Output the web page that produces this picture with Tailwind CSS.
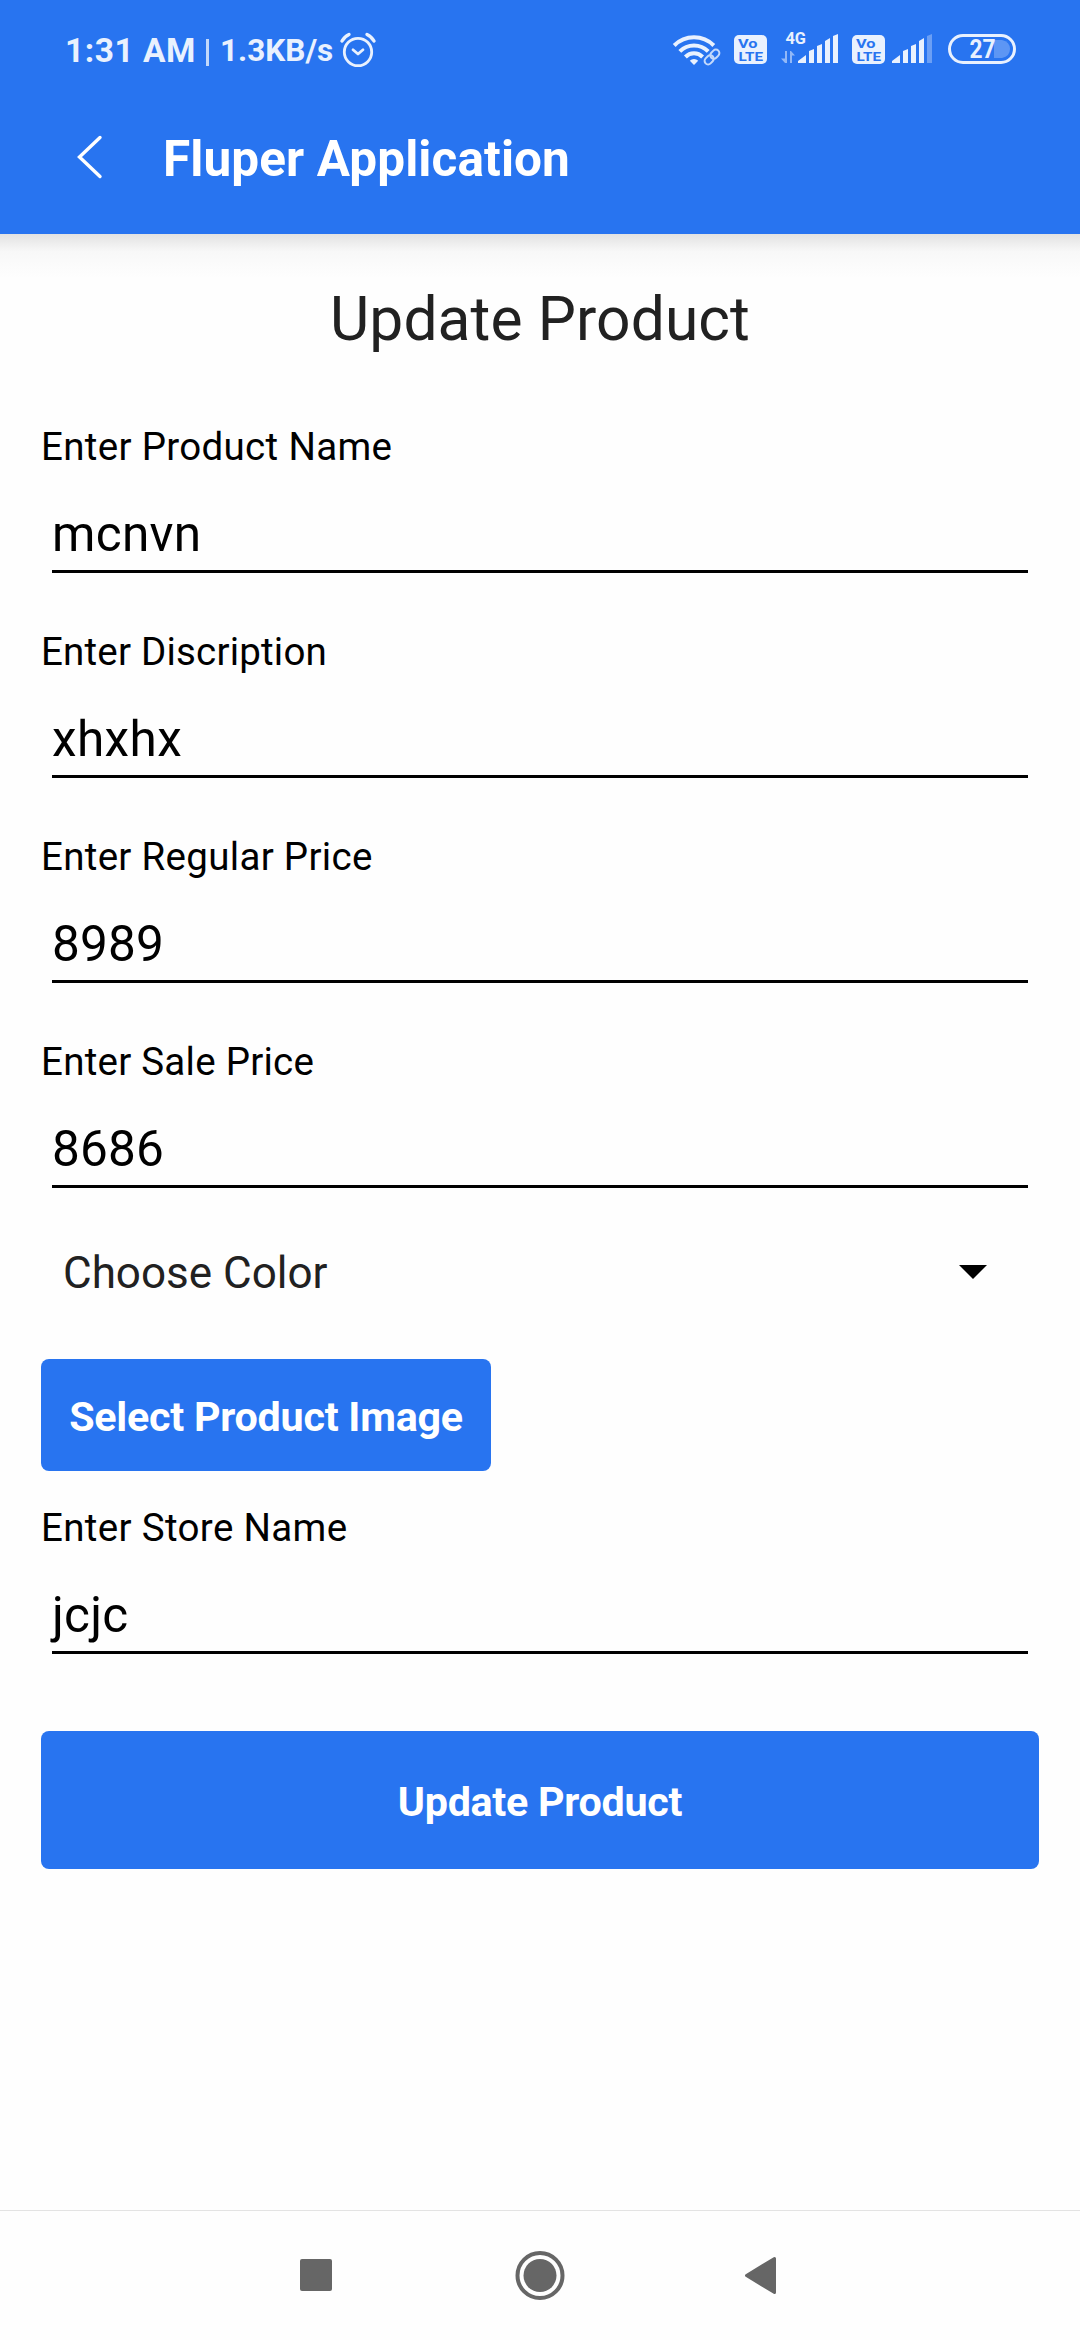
<!DOCTYPE html>
<html lang="en">
<head>
<meta charset="utf-8">
<title>Fluper Application</title>
<script src="https://cdn.jsdelivr.net/npm/@tailwindcss/browser@4"></script>
</head>
<body class="bg-white">
<div class="flex h-[2340px] w-[1080px] flex-col overflow-hidden bg-[#fefefe] font-[Roboto,sans-serif] text-black">

  <header class="relative h-[234px] shrink-0 bg-[#2874f0] text-white">
    <!-- Status bar -->
    <div class="flex h-[98px] items-start pt-[26px] text-[#e9f1fe]">
      <div class="ml-[65px] flex h-[48px] w-[320px] items-start font-bold whitespace-nowrap">
        <span class="w-[141px] text-[33.5px] leading-[49px] tracking-[0.5px]">1:31 AM</span>
        <span class="h-[27px] w-[3px] mt-[13px] bg-[#e9f1fe]/80"></span>
        <span class="ml-[11px] w-[119px] text-[31.5px] leading-[50px]">1.3KB/s</span>
        <svg class="mt-[5px] h-[38px] w-[38px] shrink-0" viewBox="339 31 38 38" fill="none" stroke="currentColor" stroke-linecap="round">
          <circle cx="358" cy="52" r="13.7" stroke-width="2.8"/>
          <path d="M353 49.8l5 4.2 5-4.2" stroke-width="2.8" stroke-linejoin="round"/>
          <path d="M342 41q2.500-4.500 7-6.500M374 41q-2.500-4.500-7-6.500" stroke-width="3.400"/>
        </svg>
      </div>
      <svg class="ml-[285px] mt-[4px] h-[38px] w-[52px]" viewBox="670 30 52 38" fill="none" stroke="currentColor">
        <path d="M674.200 45.500a28 28 0 0 1 39.600 0" stroke-width="4"/>
        <path d="M679.800 51.300a20 20 0 0 1 28.400 0" stroke-width="4"/>
        <path d="M685.400 57a12 12 0 0 1 17.200 0" stroke-width="4"/>
        <path d="M694 65l-4.200-4.300a6 6 0 0 1 8.400 0z" fill="currentColor" stroke="none"/>
        <g stroke="#2874f0" stroke-width="6"><path d="M709 60l7-7"/></g>
        <g stroke="#c3d9fb" stroke-width="2" transform="rotate(-45 712 57)"><rect x="703" y="53.500" width="10" height="7" rx="3.500"/><rect x="711" y="53.500" width="10" height="7" rx="3.500"/></g>
      </svg>
      <svg class="ml-[11px] mt-[4px] h-[38px] w-[35px]" viewBox="733 30 35 38">
        <rect x="734" y="35" width="33" height="29" rx="5" fill="currentColor"/>
        <text x="738" y="47.700" textLength="19.500" lengthAdjust="spacingAndGlyphs" font-size="13.500" font-weight="700" fill="#2874f0">Vo</text>
        <text x="738.500" y="61" textLength="24.500" lengthAdjust="spacingAndGlyphs" font-size="13.500" font-weight="700" fill="#2874f0">LTE</text>
      </svg>
      <svg class="ml-[12px] mt-[4px] h-[38px] w-[60px]" viewBox="780 30 60 38" fill="currentColor">
        <text x="785.500" y="44" textLength="20.500" lengthAdjust="spacingAndGlyphs" font-size="16" font-weight="700">4G</text>
        <path d="M785 51h2v12h-2l-4-4.500h4zM790 63h2v-7.500h3l-4-4.500h-1z" opacity=".55"/>
        <path d="M798 63v-2l8-6v8zM809 63V51l5-2v14zM817 63V46l5-2v19zM825 63V41l5-3v25zM833 63V36l5-2v29z"/>
      </svg>
      <svg class="ml-[11px] mt-[4px] h-[38px] w-[35px]" viewBox="851 30 35 38">
        <rect x="852" y="35" width="33" height="29" rx="5" fill="currentColor"/>
        <text x="856" y="47.700" textLength="19.500" lengthAdjust="spacingAndGlyphs" font-size="13.500" font-weight="700" fill="#2874f0">Vo</text>
        <text x="856.500" y="61" textLength="24.500" lengthAdjust="spacingAndGlyphs" font-size="13.500" font-weight="700" fill="#2874f0">LTE</text>
      </svg>
      <svg class="ml-[5px] mt-[4px] h-[38px] w-[42px]" viewBox="891 30 42 38" fill="currentColor">
        <path d="M892 63v-2l8-6v8zM903 63V51l5-2v14zM911 63V46l5-2v19zM919 63V41l5-3v25z"/>
        <path d="M927 63V36l5-2v29z" opacity=".35"/>
      </svg>
      <svg class="ml-[14px] mt-[4px] h-[38px] w-[70px]" viewBox="947 30 70 38">
        <rect x="949.500" y="35.500" width="65" height="27" rx="13.500" fill="none" stroke="currentColor" stroke-width="3"/>
        <path d="M994 40h8q8 2 8 9t-8 9h-8z" fill="currentColor" opacity=".28"/>
        <text x="969.500" y="57.500" textLength="26" lengthAdjust="spacingAndGlyphs" font-size="25" font-weight="700" fill="currentColor">27</text>
      </svg>
    </div>
    <!-- App bar -->
    <div class="flex h-[120px] items-start">
      <svg class="ml-[76px] mt-[36px] h-[46px] w-[28px]" viewBox="76 134 28 46" fill="none" stroke="currentColor" stroke-width="3.400">
        <path d="M100 137.500L79.500 157 100 176.500" stroke-linecap="round"/>
      </svg>
      <h1 class="ml-[59px] mt-[29px] text-[49.5px] leading-[64px] font-bold tracking-[0.1px] whitespace-nowrap">Fluper Application</h1>
    </div>
    <div class="absolute inset-x-0 top-full h-[44px] bg-linear-to-b from-[#e2e2e2] via-[#f8f8f8] via-40% to-[#fefefe]"></div>
  </header>

  <main class="flex grow flex-col px-[41px]">
    <h2 class="mt-[46px] text-center text-[60.5px] leading-[80px] tracking-[0.1px] text-[#212121]">Update Product</h2>

    <div class="mt-[62px] flex flex-col gap-[54px]">
      <div>
        <div class="text-[38.5px] leading-[50px] tracking-[0.32px]">Enter Product Name</div>
        <div class="mx-[11px] h-[101px] border-b-3 border-black pt-[30px] text-[49.5px] leading-[64px] tracking-[0.3px]">mcnvn</div>
      </div>
      <div>
        <div class="text-[38.5px] leading-[50px] tracking-[0.2px]">Enter Discription</div>
        <div class="mx-[11px] h-[101px] border-b-3 border-black pt-[30px] text-[49.5px] leading-[64px] tracking-[0.4px]">xhxhx</div>
      </div>
      <div>
        <div class="text-[38.5px] leading-[50px] tracking-[0.3px]">Enter Regular Price</div>
        <div class="mx-[11px] h-[101px] border-b-3 border-black pt-[30px] text-[49.5px] leading-[64px] tracking-[0.2px]">8989</div>
      </div>
      <div>
        <div class="text-[38.5px] leading-[50px] tracking-[0.25px]">Enter Sale Price</div>
        <div class="mx-[11px] h-[101px] border-b-3 border-black pt-[30px] text-[49.5px] leading-[64px] tracking-[0.2px]">8686</div>
      </div>
    </div>

    <div class="mt-[55px] flex h-[60px] items-start justify-between pr-[52px] pl-[22px] text-[44px] leading-[60px] text-[#212121]">
      <span>Choose Color</span>
      <svg class="mt-[22px] h-[14px] w-[28px]" viewBox="0 0 28 14"><path d="M0 0h28L14 14z" fill="#000"/></svg>
    </div>

    <button class="mt-[56px] flex h-[112px] w-[450px] items-center justify-center rounded-[8px] bg-[#2874f0] pt-[5px] text-[41.25px] font-bold tracking-[-0.25px] whitespace-nowrap text-white">Select Product Image</button>

    <div class="mt-[32px]">
      <div class="text-[38.5px] leading-[50px] tracking-[0.34px]">Enter Store Name</div>
      <div class="mx-[11px] h-[101px] border-b-3 border-black pt-[30px] text-[49.5px] leading-[64px] tracking-[0.2px]">jcjc</div>
    </div>

    <button class="mt-[77px] flex h-[138px] items-center justify-center rounded-[8px] bg-[#2874f0] pt-[5px] text-[41.25px] font-bold tracking-[-0.28px] text-white">Update Product</button>
  </main>

  <!-- Navigation bar -->
  <nav class="flex h-[130px] shrink-0 items-center justify-center border-t border-[#e3e3e3] pb-[1px] text-[#666]">
    <svg class="h-[50px] w-[50px]" viewBox="291 2250 50 50"><rect x="300" y="2259" width="32" height="32" rx="2" fill="currentColor"/></svg>
    <svg class="mx-[174px] h-[50px] w-[50px]" viewBox="515 2250 50 50"><circle cx="540" cy="2275.500" r="22.500" fill="none" stroke="currentColor" stroke-width="4"/><circle cx="540" cy="2275.500" r="16.500" fill="currentColor"/></svg>
    <svg class="h-[50px] w-[50px]" viewBox="739 2250 50 50"><path d="M746.500 2275.500L774.500 2258.500V2292.500z" fill="currentColor" stroke="currentColor" stroke-width="3" stroke-linejoin="round"/></svg>
  </nav>
</div>
</body>
</html>
